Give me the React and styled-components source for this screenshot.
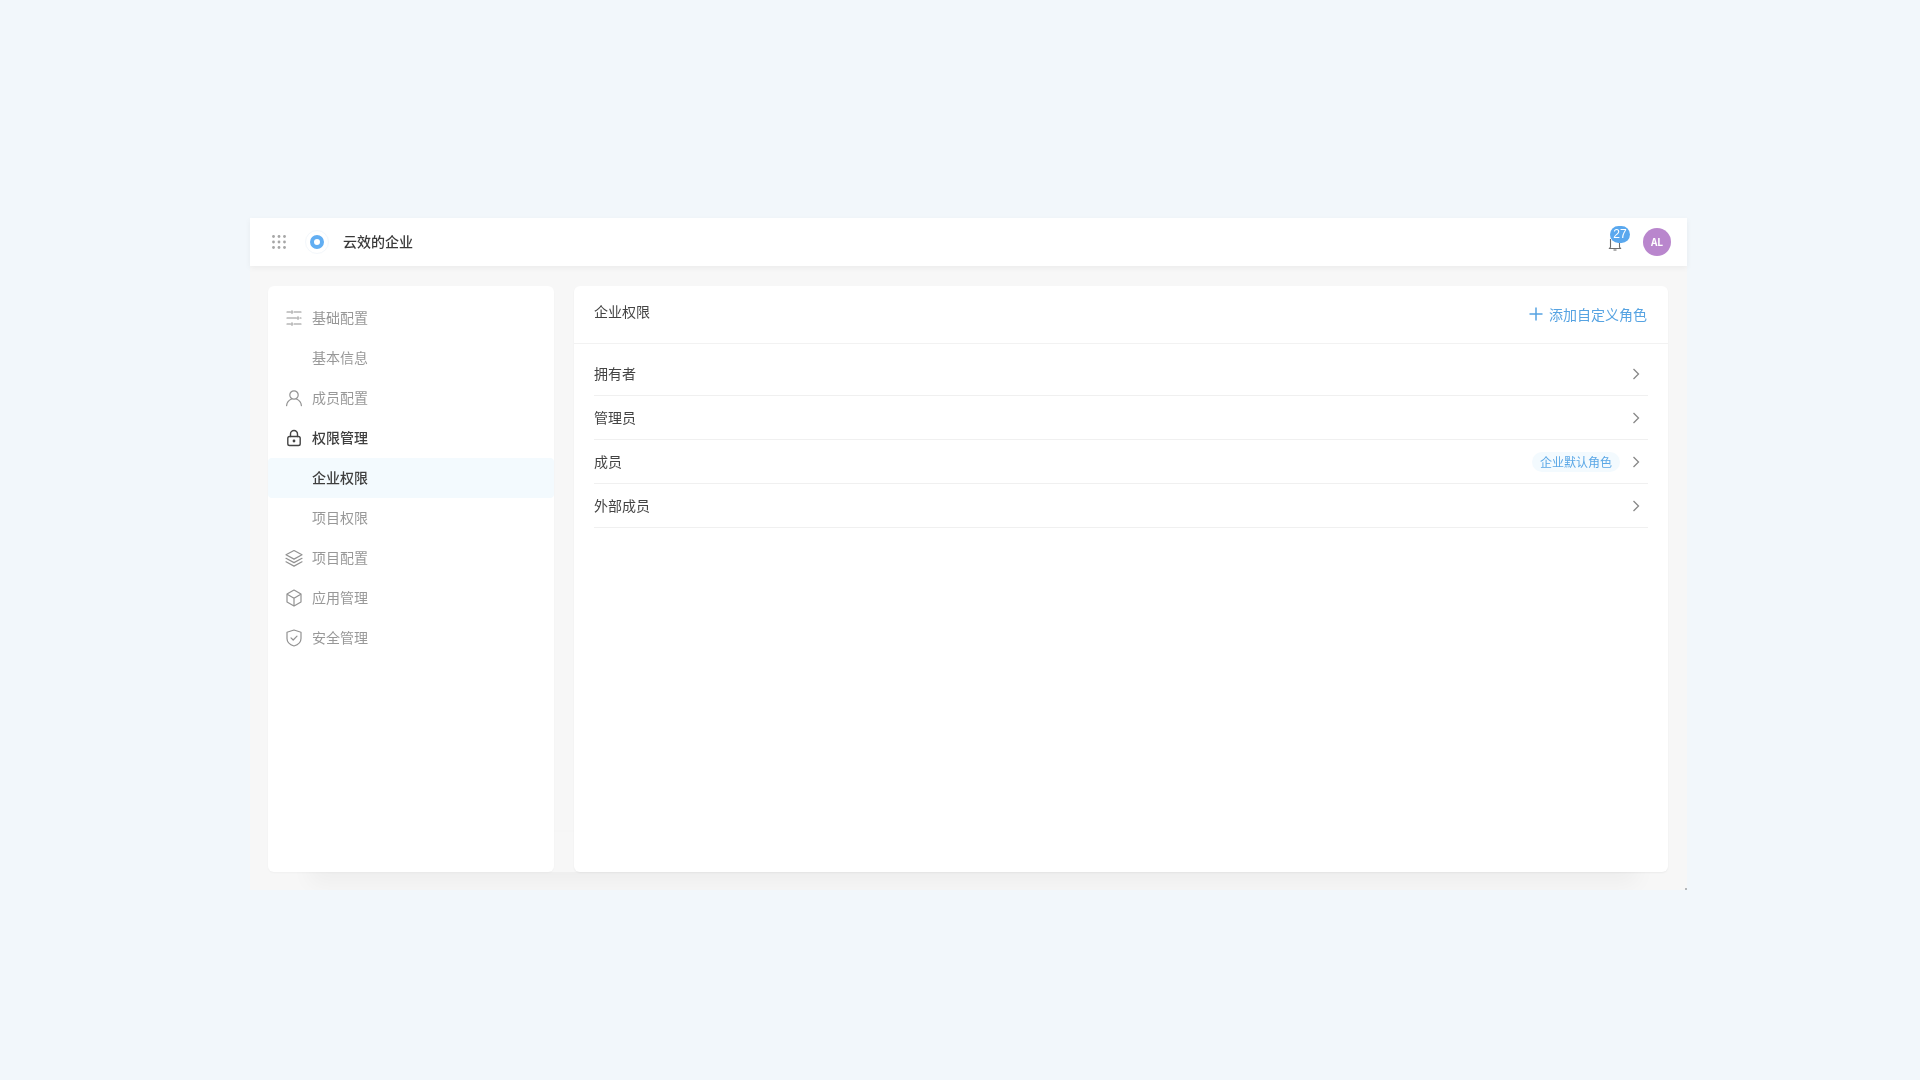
import React from "react";
import styled, { createGlobalStyle } from "styled-components";

const GlobalStyle = createGlobalStyle`
  html, body {
    margin: 0;
    padding: 0;
    background: #f2f7fb;
  }
  * {
    box-sizing: border-box;
  }
`;

const Page = styled.div`
  width: 1920px;
  height: 1080px;
  padding: 218px 0 0 250px;
  font-family: "Noto Sans CJK SC", "Noto Sans", sans-serif;
  font-size: 14px;
  color: #444;
`;

const AppWindow = styled.div`
  position: relative;
  width: 1437px;
  height: 672px;
  background: #f7f7f7;
  display: flex;
  flex-direction: column;
  filter: blur(0.4px);

  &:after {
    content: "";
    position: absolute;
    right: 0;
    bottom: 0;
    width: 2px;
    height: 2px;
    background: #b5b8bb;
  }
`;

const TopBar = styled.header`
  position: relative;
  z-index: 2;
  height: 48px;
  flex-shrink: 0;
  background: #fff;
  box-shadow: 0 2px 6px rgba(0, 0, 0, 0.05);
  display: flex;
  align-items: center;
  padding: 0 16px 0 22px;
`;

const CompanyLogo = styled.div`
  width: 24px;
  height: 24px;
  margin-left: 19px;
  border-radius: 50%;
  border: 1px solid #f3f7fb;
  display: flex;
  align-items: center;
  justify-content: center;
`;

const LogoDot = styled.span`
  width: 14px;
  height: 14px;
  border-radius: 50%;
  border: 4.5px solid #62aef2;
  background: #fff;
`;

const CompanyName = styled.div`
  margin: 0 0 2px 14px;
  font-weight: 500;
  color: #3a3a3a;
  line-height: 20px;
`;

const TopRight = styled.div`
  margin-left: auto;
  display: flex;
  align-items: center;
  gap: 20px;
`;

const BellWrap = styled.div`
  position: relative;
  width: 16px;
  height: 16px;
  margin-top: 4px;
`;

const Badge = styled.span`
  position: absolute;
  left: 3px;
  top: -10px;
  min-width: 20px;
  height: 17px;
  padding: 0 3px;
  border-radius: 9px;
  background: #5aa8ee;
  color: #fff;
  font-family: "Liberation Sans", sans-serif;
  font-size: 12px;
  line-height: 17px;
  text-align: center;
`;

const Avatar = styled.div`
  width: 28px;
  height: 28px;
  border-radius: 50%;
  background: #b986cd;
  color: #fff;
  font-size: 10px;
  font-weight: 700;
  line-height: 28px;
  text-align: center;
`;

const Content = styled.div`
  position: relative;
  flex: 1;
  min-height: 0;
  overflow: hidden;
  display: flex;
  gap: 20px;
  padding: 20px 19px 18px 18px;

  &:before {
    content: "";
    position: absolute;
    left: 60px;
    right: 50px;
    bottom: 18px;
    height: 40px;
    box-shadow: 0 12px 22px rgba(0, 0, 0, 0.04);
  }
`;

const Sidebar = styled.nav`
  position: relative;
  width: 286px;
  flex-shrink: 0;
  padding-top: 12px;
  background: #fff;
  border-radius: 6px;
  box-shadow: 0 1px 2px rgba(0, 0, 0, 0.03);
`;

const NavItem = styled.div`
  height: 40px;
  display: flex;
  align-items: center;
  padding: 0 0 2px 44px;
  position: relative;
  border-radius: 4px;
  color: ${(p) => (p.$strong ? "#3f3f3f" : "#989898")};
  font-weight: ${(p) => (p.$strong ? 500 : 400)};
  background: ${(p) => (p.$active ? "#f3fafe" : "transparent")};
`;

const NavIcon = styled.svg`
  position: absolute;
  left: 17px;
  top: 10.5px;
  width: 18px;
  height: 18px;
  fill: none;
  stroke: ${(p) => (p.$strong ? "#444" : "#929292")};
  stroke-width: ${(p) => (p.$strong ? 1.4 : 1.2)};
  stroke-linecap: round;
  stroke-linejoin: round;
`;

const Main = styled.main`
  position: relative;
  flex: 1;
  background: #fff;
  border-radius: 6px;
  box-shadow: 0 1px 2px rgba(0, 0, 0, 0.05);
`;

const MainHeader = styled.div`
  height: 58px;
  padding: 14px 21px 0 20px;
  border-bottom: 1px solid #f2f2f2;
  display: flex;
  justify-content: space-between;
`;

const MainTitle = styled.div`
  line-height: 22px;
  color: #444;
`;

const AddButton = styled.div`
  display: flex;
  align-items: center;
  height: 22px;
  margin-top: 3px;
  gap: 5px;
  color: #56a3e2;
  line-height: 22px;
`;

const RoleList = styled.div`
  padding: 8px 20px 0;
`;

const RoleRow = styled.div`
  height: 44px;
  padding-bottom: 2px;
  border-bottom: 1px solid #f0f0f0;
  display: flex;
  align-items: center;
  color: #444;
`;

const DefaultTag = styled.span`
  margin: 2px 0 0 auto;
  height: 20px;
  padding: 0 8px;
  border-radius: 10px;
  background: #f3fafe;
  color: #5aa7e6;
  font-size: 12px;
  line-height: 20px;
`;

const Chevron = styled.svg`
  width: 16px;
  height: 16px;
  margin: 2px 4px 0 ${(p) => (p.$tagged ? "8px" : "auto")};
  fill: none;
  stroke: #888;
  stroke-width: 1.3;
`;

const MenuGrid = () => (
  <svg width="14" height="14" viewBox="0 0 14 14" fill="#a6a6a6">
    {[1.5, 7, 12.5].map((y) =>
      [1.5, 7, 12.5].map((x) => <circle key={x + "-" + y} cx={x} cy={y} r="1.4" />)
    )}
  </svg>
);

const icons = {
  sliders: (
    <>
      <path d="M2 3h3.5M9 3h7M2 9h9.5M15 9h1M2 15h3.5M9 15h7" />
      <path d="M7 1.8v2.4M13 7.8v2.4M7 13.8v2.4" />
    </>
  ),
  user: (
    <>
      <circle cx="9" cy="6" r="4.2" />
      <path d="M1.6 16.6c.3-3.4 2.6-5.6 5-6.6M16.4 16.6c-.3-3.4-2.6-5.6-5-6.6" />
    </>
  ),
  lock: (
    <>
      <rect x="2.8" y="7.5" width="12.4" height="9" rx="1.8" />
      <path d="M5.5 7.5V5a3.5 3.5 0 0 1 7 0v2.5" />
      <circle cx="9" cy="12" r="0.7" />
    </>
  ),
  layers: (
    <>
      <path d="M9 1.5 17 5.8 9 10.1 1 5.8Z" />
      <path d="M1 9.3 9 13.6 17 9.3M1 12.8 9 17.1 17 12.8" />
    </>
  ),
  box: (
    <>
      <path d="M9 1 16 5v8l-7 4-7-4V5Z" />
      <path d="M2.6 5.4 9 9.2l6.4-3.8M9 9.2v7.4" />
    </>
  ),
  shield: (
    <>
      <path d="M9 1 16 3.2v6.2c0 3.8-3.1 6.4-7 7.6-3.9-1.2-7-3.8-7-7.6V3.2Z" />
      <path d="M6 8.8 8.2 11 12 7.2" />
    </>
  ),
};

const navItems = [
  { label: "基础配置", icon: "sliders" },
  { label: "基本信息" },
  { label: "成员配置", icon: "user" },
  { label: "权限管理", icon: "lock", strong: true },
  { label: "企业权限", strong: true, active: true },
  { label: "项目权限" },
  { label: "项目配置", icon: "layers" },
  { label: "应用管理", icon: "box" },
  { label: "安全管理", icon: "shield" },
];

const roles = [
  { name: "拥有者" },
  { name: "管理员" },
  { name: "成员", tag: "企业默认角色" },
  { name: "外部成员" },
];

const App = () => {
  return (
    <Page>
      <GlobalStyle />
      <AppWindow>
        <TopBar>
          <MenuGrid />
          <CompanyLogo>
            <LogoDot />
          </CompanyLogo>
          <CompanyName>云效的企业</CompanyName>
          <TopRight>
            <BellWrap>
              <svg width="16" height="16" viewBox="0 0 16 16" fill="none" stroke="#6e6e6e" strokeWidth="1.1">
                <path d="M3.5 3v8L2.5 12.5h11L12.5 11V3" />
                <path d="M6.5 14h3" />
              </svg>
              <Badge>27</Badge>
            </BellWrap>
            <Avatar>AL</Avatar>
          </TopRight>
        </TopBar>
        <Content>
          <Sidebar>
            {navItems.map((item) => (
              <NavItem key={item.label} $strong={item.strong} $active={item.active}>
                {item.icon && (
                  <NavIcon viewBox="0 0 18 18" $strong={item.strong}>
                    {icons[item.icon]}
                  </NavIcon>
                )}
                {item.label}
              </NavItem>
            ))}
          </Sidebar>
          <Main>
            <MainHeader>
              <MainTitle>企业权限</MainTitle>
              <AddButton>
                <svg width="16" height="16" viewBox="0 0 16 16" stroke="#56a3e2" strokeWidth="1.5">
                  <path d="M8 1.5v13M1.5 8h13" />
                </svg>
                添加自定义角色
              </AddButton>
            </MainHeader>
            <RoleList>
              {roles.map((role) => (
                <RoleRow key={role.name}>
                  {role.name}
                  {role.tag && <DefaultTag>{role.tag}</DefaultTag>}
                  <Chevron viewBox="0 0 16 16" $tagged={!!role.tag}>
                    <path d="M5.5 3 10.5 8 5.5 13" />
                  </Chevron>
                </RoleRow>
              ))}
            </RoleList>
          </Main>
        </Content>
      </AppWindow>
    </Page>
  );
};

export default App;
